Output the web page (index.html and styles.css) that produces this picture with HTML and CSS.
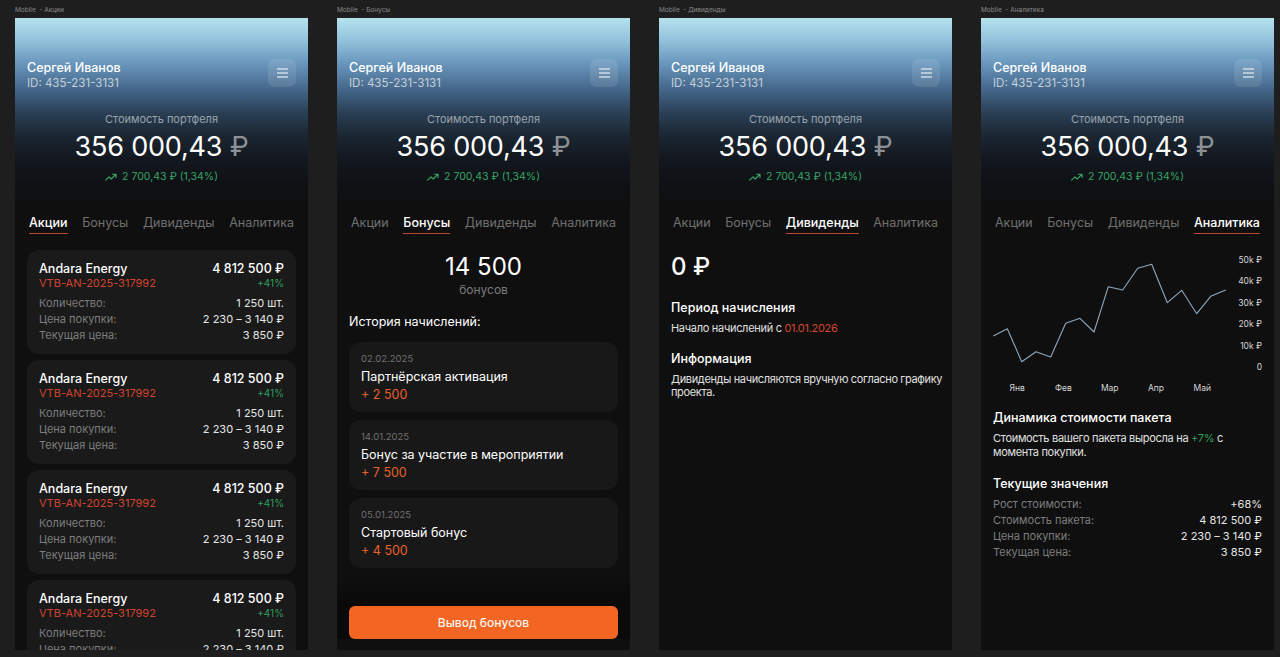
FILE: index.html
```html
<!DOCTYPE html>
<html lang="ru">
<head>
<meta charset="utf-8">
<title>Mobile screens</title>
<link rel="stylesheet" href="styles.css">
</head>
<body>
<div class="canvas">

  <!-- Board 1: Акции -->
  <section class="board">
    <div class="board-label">Mobile &nbsp;- Акции</div>
    <div class="phone">
      <header class="hero">
        <div class="user-row">
          <div class="user">
            <div class="user-name">Сергей Иванов</div>
            <div class="user-id">ID: 435-231-3131</div>
          </div>
          <button class="menu-btn" aria-label="Меню"><svg width="11" height="10" viewBox="0 0 11 10"><path d="M0.5 1H10.5M0.5 5H10.5M0.5 9H10.5" stroke="#fff" stroke-width="1.2" stroke-linecap="round"/></svg></button>
        </div>
        <div class="balance">
          <div class="balance-label">Стоимость портфеля</div>
          <div class="balance-value">356 000,43 <span class="rub">₽</span></div>
          <div class="balance-change"><svg width="12" height="8" viewBox="0 0 12 8"><path d="M0.6 7.2L4 3.8L6.2 6L10.8 1.4M7.6 1.2H11V4.6" fill="none" stroke="#3aa866" stroke-width="1.1" stroke-linecap="round" stroke-linejoin="round"/></svg>2 700,43 ₽ (1,34%)</div>
        </div>
      </header>
      <nav class="tabs">
        <span class="tab active">Акции</span><span class="tab">Бонусы</span><span class="tab">Дивиденды</span><span class="tab">Аналитика</span>
      </nav>
      <div class="content stocks">
        <article class="stock-card">
          <div class="stock-head">
            <div><div class="stock-name">Andara Energy</div><div class="stock-code">VTB-AN-2025-317992</div></div>
            <div class="right"><div class="stock-sum">4 812 500 ₽</div><div class="stock-pct">+41%</div></div>
          </div>
          <div class="kv"><span>Количество:</span><span>1 250 шт.</span></div>
          <div class="kv"><span>Цена покупки:</span><span>2 230 – 3 140 ₽</span></div>
          <div class="kv"><span>Текущая цена:</span><span>3 850 ₽</span></div>
        </article>
        <article class="stock-card">
          <div class="stock-head">
            <div><div class="stock-name">Andara Energy</div><div class="stock-code">VTB-AN-2025-317992</div></div>
            <div class="right"><div class="stock-sum">4 812 500 ₽</div><div class="stock-pct">+41%</div></div>
          </div>
          <div class="kv"><span>Количество:</span><span>1 250 шт.</span></div>
          <div class="kv"><span>Цена покупки:</span><span>2 230 – 3 140 ₽</span></div>
          <div class="kv"><span>Текущая цена:</span><span>3 850 ₽</span></div>
        </article>
        <article class="stock-card">
          <div class="stock-head">
            <div><div class="stock-name">Andara Energy</div><div class="stock-code">VTB-AN-2025-317992</div></div>
            <div class="right"><div class="stock-sum">4 812 500 ₽</div><div class="stock-pct">+41%</div></div>
          </div>
          <div class="kv"><span>Количество:</span><span>1 250 шт.</span></div>
          <div class="kv"><span>Цена покупки:</span><span>2 230 – 3 140 ₽</span></div>
          <div class="kv"><span>Текущая цена:</span><span>3 850 ₽</span></div>
        </article>
        <article class="stock-card">
          <div class="stock-head">
            <div><div class="stock-name">Andara Energy</div><div class="stock-code">VTB-AN-2025-317992</div></div>
            <div class="right"><div class="stock-sum">4 812 500 ₽</div><div class="stock-pct">+41%</div></div>
          </div>
          <div class="kv"><span>Количество:</span><span>1 250 шт.</span></div>
          <div class="kv"><span>Цена покупки:</span><span>2 230 – 3 140 ₽</span></div>
          <div class="kv"><span>Текущая цена:</span><span>3 850 ₽</span></div>
        </article>
      </div>
    </div>
  </section>

  <!-- Board 2: Бонусы -->
  <section class="board">
    <div class="board-label">Mobile &nbsp;- Бонусы</div>
    <div class="phone">
      <header class="hero">
        <div class="user-row">
          <div class="user">
            <div class="user-name">Сергей Иванов</div>
            <div class="user-id">ID: 435-231-3131</div>
          </div>
          <button class="menu-btn" aria-label="Меню"><svg width="11" height="10" viewBox="0 0 11 10"><path d="M0.5 1H10.5M0.5 5H10.5M0.5 9H10.5" stroke="#fff" stroke-width="1.2" stroke-linecap="round"/></svg></button>
        </div>
        <div class="balance">
          <div class="balance-label">Стоимость портфеля</div>
          <div class="balance-value">356 000,43 <span class="rub">₽</span></div>
          <div class="balance-change"><svg width="12" height="8" viewBox="0 0 12 8"><path d="M0.6 7.2L4 3.8L6.2 6L10.8 1.4M7.6 1.2H11V4.6" fill="none" stroke="#3aa866" stroke-width="1.1" stroke-linecap="round" stroke-linejoin="round"/></svg>2 700,43 ₽ (1,34%)</div>
        </div>
      </header>
      <nav class="tabs">
        <span class="tab">Акции</span><span class="tab active">Бонусы</span><span class="tab">Дивиденды</span><span class="tab">Аналитика</span>
      </nav>
      <div class="content bonuses">
        <div class="bonus-total">
          <div class="bonus-num">14 500</div>
          <div class="bonus-unit">бонусов</div>
        </div>
        <h3 class="section-title history-title">История начислений:</h3>
        <div class="history">
          <article class="hist-card">
            <div class="hist-date">02.02.2025</div>
            <div class="hist-title">Партнёрская активация</div>
            <div class="hist-amount">+ 2 500</div>
          </article>
          <article class="hist-card">
            <div class="hist-date">14.01.2025</div>
            <div class="hist-title">Бонус за участие в мероприятии</div>
            <div class="hist-amount">+ 7 500</div>
          </article>
          <article class="hist-card">
            <div class="hist-date">05.01.2025</div>
            <div class="hist-title">Стартовый бонус</div>
            <div class="hist-amount">+ 4 500</div>
          </article>
        </div>
        <div class="bottom-bar">
          <button class="primary-btn">Вывод бонусов</button>
        </div>
      </div>
    </div>
  </section>

  <!-- Board 3: Дивиденды -->
  <section class="board">
    <div class="board-label">Mobile &nbsp;- Дивиденды</div>
    <div class="phone">
      <header class="hero">
        <div class="user-row">
          <div class="user">
            <div class="user-name">Сергей Иванов</div>
            <div class="user-id">ID: 435-231-3131</div>
          </div>
          <button class="menu-btn" aria-label="Меню"><svg width="11" height="10" viewBox="0 0 11 10"><path d="M0.5 1H10.5M0.5 5H10.5M0.5 9H10.5" stroke="#fff" stroke-width="1.2" stroke-linecap="round"/></svg></button>
        </div>
        <div class="balance">
          <div class="balance-label">Стоимость портфеля</div>
          <div class="balance-value">356 000,43 <span class="rub">₽</span></div>
          <div class="balance-change"><svg width="12" height="8" viewBox="0 0 12 8"><path d="M0.6 7.2L4 3.8L6.2 6L10.8 1.4M7.6 1.2H11V4.6" fill="none" stroke="#3aa866" stroke-width="1.1" stroke-linecap="round" stroke-linejoin="round"/></svg>2 700,43 ₽ (1,34%)</div>
        </div>
      </header>
      <nav class="tabs">
        <span class="tab">Акции</span><span class="tab">Бонусы</span><span class="tab active">Дивиденды</span><span class="tab">Аналитика</span>
      </nav>
      <div class="content dividends">
        <div class="div-total">0 ₽</div>
        <h3 class="section-title">Период начисления</h3>
        <p class="text">Начало начислений с <span class="accent">01.01.2026</span></p>
        <h3 class="section-title info-title">Информация</h3>
        <p class="text info-text">Дивиденды начисляются вручную согласно графику проекта.</p>
      </div>
    </div>
  </section>

  <!-- Board 4: Аналитика -->
  <section class="board">
    <div class="board-label">Mobile &nbsp;- Аналитика</div>
    <div class="phone">
      <header class="hero">
        <div class="user-row">
          <div class="user">
            <div class="user-name">Сергей Иванов</div>
            <div class="user-id">ID: 435-231-3131</div>
          </div>
          <button class="menu-btn" aria-label="Меню"><svg width="11" height="10" viewBox="0 0 11 10"><path d="M0.5 1H10.5M0.5 5H10.5M0.5 9H10.5" stroke="#fff" stroke-width="1.2" stroke-linecap="round"/></svg></button>
        </div>
        <div class="balance">
          <div class="balance-label">Стоимость портфеля</div>
          <div class="balance-value">356 000,43 <span class="rub">₽</span></div>
          <div class="balance-change"><svg width="12" height="8" viewBox="0 0 12 8"><path d="M0.6 7.2L4 3.8L6.2 6L10.8 1.4M7.6 1.2H11V4.6" fill="none" stroke="#3aa866" stroke-width="1.1" stroke-linecap="round" stroke-linejoin="round"/></svg>2 700,43 ₽ (1,34%)</div>
        </div>
      </header>
      <nav class="tabs">
        <span class="tab">Акции</span><span class="tab">Бонусы</span><span class="tab">Дивиденды</span><span class="tab active">Аналитика</span>
      </nav>
      <div class="content analytics">
        <div class="chart">
          <div class="chart-row">
            <svg class="chart-svg" width="238" height="130" viewBox="0 0 238 130">
              <polyline fill="none" stroke="#8ea8bd" stroke-width="1.1" stroke-linejoin="round" points="0.3,85 14.3,77.7 28.7,110.7 43,100.7 57.7,106 72.7,72.3 87,67.3 101,81 115.3,35.7 129.7,39 144.7,17.3 158.7,13.3 174.3,51.7 188.7,39.3 203.7,62.7 217.7,45.3 232.7,39"/>
            </svg>
            <div class="y-axis">
              <span>50k ₽</span><span>40k ₽</span><span>30k ₽</span><span>20k ₽</span><span>10k ₽</span><span>0</span>
            </div>
          </div>
          <div class="x-axis">
            <span>Янв</span><span>Фев</span><span>Мар</span><span>Апр</span><span>Май</span>
          </div>
        </div>
        <h3 class="section-title dyn-title">Динамика стоимости пакета</h3>
        <p class="text">Стоимость вашего пакета выросла на <span class="pos">+7%</span> с<br>момента покупки.</p>
        <h3 class="section-title cur-title">Текущие значения</h3>
        <div class="kv"><span>Рост стоимости:</span><span>+68%</span></div>
        <div class="kv"><span>Стоимость пакета:</span><span>4 812 500 ₽</span></div>
        <div class="kv"><span>Цена покупки:</span><span>2 230 – 3 140 ₽</span></div>
        <div class="kv"><span>Текущая цена:</span><span>3 850 ₽</span></div>
      </div>
    </div>
  </section>

</div>
</body>
</html>
```

FILE: styles.css
```css
* { box-sizing: border-box; }

html, body {
  margin: 0;
  padding: 0;
  background: #1e1e1e;
  font-family: Inter, "Noto Sans", "Liberation Sans", sans-serif;
  color: #f2f2f2;
}

.canvas {
  display: flex;
  gap: 29px;
  padding-left: 15px;
  height: 657px;
  overflow: hidden;
}

.board {
  width: 293px;
  flex: none;
  display: flex;
  flex-direction: column;
}

.board-label {
  height: 18px;
  padding-top: 6px;
  font-size: 6.5px;
  line-height: 8px;
  color: #8b8b8b;
  white-space: pre;
}

.phone {
  height: 632px;
  overflow: hidden;
  display: flex;
  flex-direction: column;
  background-color: #0f0f0f;
  background-image: linear-gradient(180deg, #b6e2ee 0px, #93c3dc 22px, #6a97bd 45px, #46698c 70px, #2a3f55 95px, #1b2631 118px, #131820 140px, #0f1114 165px, #0f0f0f 190px);
  background-size: 100% 200px;
  background-repeat: no-repeat;
}

/* ---------- hero ---------- */
.hero {
  padding: 42px 12px 0;
}

.user-row {
  display: flex;
  justify-content: space-between;
  align-items: center;
}

.user-name {
  font-size: 12.5px;
  line-height: 16px;
  font-weight: 500;
  color: #fff;
}

.user-id {
  font-size: 11.5px;
  line-height: 14px;
  color: #c5d0da;
}

.menu-btn {
  width: 28px;
  height: 28px;
  border: none;
  border-radius: 7px;
  background: rgba(255, 255, 255, 0.1);
  display: flex;
  align-items: center;
  justify-content: center;
  padding: 0;
  margin-top: -4px;
}

.balance {
  margin-top: 22px;
  display: flex;
  flex-direction: column;
  align-items: center;
}

.balance-label {
  font-size: 11px;
  line-height: 14px;
  color: #9aa3ab;
}

.balance-value {
  margin-top: 4px;
  font-size: 27px;
  line-height: 34px;
  font-weight: 400;
  color: #fff;
  letter-spacing: -0.2px;
}

.balance-value .rub {
  color: #8d9196;
}

.balance-change {
  margin-top: 6px;
  display: flex;
  align-items: center;
  gap: 5px;
  font-size: 10.5px;
  line-height: 14px;
  color: #36a463;
}

/* ---------- tabs ---------- */
.tabs {
  margin-top: 31px;
  padding: 0 14px;
  display: flex;
  justify-content: space-between;
}

.tab {
  font-size: 12.5px;
  line-height: 16px;
  color: #6f6f6f;
  padding-bottom: 2px;
  border-bottom: 1px solid transparent;
}

.tab.active {
  color: #fff;
  font-weight: 500;
  border-bottom-color: #b8472e;
}

.content {
  flex: 1;
  display: flex;
  flex-direction: column;
  min-height: 0;
}

/* ---------- stocks ---------- */
.stocks {
  padding: 16px 12px 0;
  gap: 6px;
}

.stock-card {
  flex: none;
  background: #1a1a1a;
  border-radius: 12px;
  padding: 12px 12px 11px;
}

.stock-head {
  display: flex;
  justify-content: space-between;
  margin-bottom: 5px;
}

.stock-head .right {
  text-align: right;
}

.stock-name, .stock-sum {
  font-size: 12.5px;
  line-height: 14px;
  font-weight: 500;
  color: #fff;
}

.stock-code {
  font-size: 11px;
  line-height: 14px;
  color: #d2432f;
}

.stock-pct {
  font-size: 10px;
  line-height: 14px;
  color: #2f9d5b;
}

.kv {
  display: flex;
  justify-content: space-between;
  font-size: 11px;
  line-height: 16px;
}

.kv span:first-child { color: #7d7d7d; }
.kv span:last-child { color: #e6e6e6; }

/* ---------- bonuses ---------- */
.bonuses {
  padding: 19px 12px 11px;
}

.bonus-total {
  display: flex;
  flex-direction: column;
  align-items: center;
}

.bonus-num {
  font-size: 24px;
  line-height: 28px;
  color: #fff;
}

.bonus-unit {
  font-size: 12px;
  line-height: 16px;
  color: #7b7b7b;
  margin-top: 1px;
}

.section-title {
  margin: 0;
  font-size: 12.5px;
  line-height: 16px;
  font-weight: 500;
  color: #fff;
}

.history-title {
  margin-top: 16px;
  font-weight: 400;
}

.history {
  margin-top: 12px;
  display: flex;
  flex-direction: column;
  gap: 8px;
}

.hist-card {
  height: 70px;
  background: #181818;
  border-radius: 12px;
  padding: 11px 12px 0;
}

.hist-date {
  font-size: 9.5px;
  line-height: 12px;
  color: #707070;
}

.hist-title {
  margin-top: 4px;
  font-size: 12.5px;
  line-height: 16px;
  color: #fff;
}

.hist-amount {
  margin-top: 2px;
  font-size: 12.5px;
  line-height: 16px;
  color: #e8602b;
}

.bottom-bar {
  margin-top: auto;
  margin-left: -12px;
  margin-right: -12px;
  padding: 30px 12px 0;
  background: linear-gradient(180deg, rgba(10,10,10,0) 0%, #0a0a0a 40%);
}

.primary-btn {
  display: block;
  width: 100%;
  height: 33px;
  border: none;
  border-radius: 6px;
  background: #f26522;
  color: #fff4ee;
  font-family: inherit;
  font-size: 12px;
  font-weight: 500;
}

/* ---------- dividends ---------- */
.dividends {
  padding: 19px 2px 0 12px;
}

.div-total {
  font-size: 24px;
  line-height: 28px;
  font-weight: 500;
  color: #fff;
  margin-bottom: 19px;
}

.text {
  margin: 6px 0 0;
  font-size: 11px;
  line-height: 13.5px;
  color: #e0e0e0;
  letter-spacing: -0.3px;
}

.info-text {
  letter-spacing: -0.35px;
}

.accent { color: #d4462f; }
.pos { color: #33a05e; }

.info-title {
  margin-top: 15px;
}

/* ---------- analytics ---------- */
.analytics {
  padding: 0 12px;
}

.chart {
  margin-top: 17px;
}

.chart-row {
  display: flex;
  justify-content: space-between;
  height: 126px;
}

.chart-svg {
  display: block;
  overflow: visible;
}

.y-axis {
  display: flex;
  flex-direction: column;
  justify-content: space-between;
  align-items: flex-end;
  padding: 3px 0 4px;
  font-size: 8.5px;
  line-height: 12px;
  color: #d6d6d6;
}

.x-axis {
  display: flex;
  padding-left: 1px;
  margin-top: 5px;
}

.x-axis span {
  width: 46.3px;
  text-align: center;
  font-size: 8.5px;
  line-height: 12px;
  color: #d6d6d6;
}

.dyn-title {
  margin-top: 16px;
}

.cur-title {
  margin-top: 17px;
  margin-bottom: 4px;
}
```
